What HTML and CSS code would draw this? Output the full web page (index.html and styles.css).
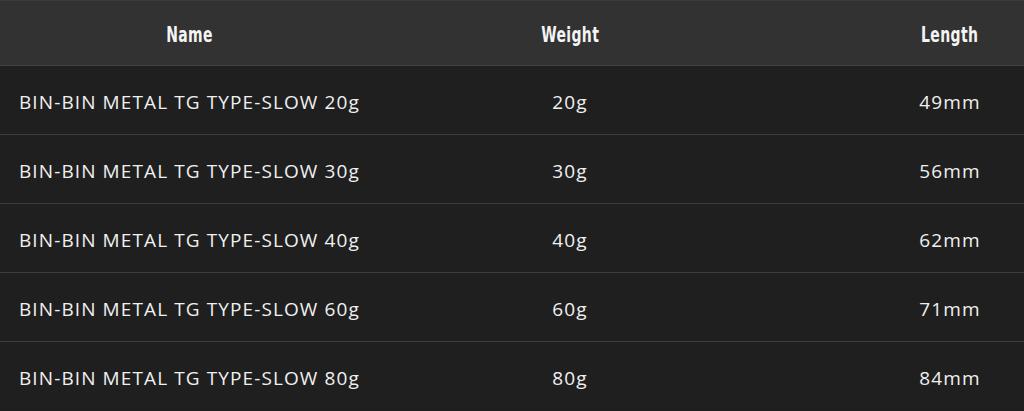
FILE: index.html
```html
<!DOCTYPE html>
<html>
<head>
<meta charset="utf-8">
<link rel="stylesheet" href="styles.css">
</head>
<body>
<div class="table">
  <div class="row head">
    <div class="cell c1"><span class="th">Name</span></div>
    <div class="cell c2"><span class="th">Weight</span></div>
    <div class="cell c3"><span class="th">Length</span></div>
  </div>
  <div class="row">
    <div class="cell c1">BIN-BIN METAL TG TYPE-SLOW 20g</div>
    <div class="cell c2">20g</div>
    <div class="cell c3">49mm</div>
  </div>
  <div class="row">
    <div class="cell c1">BIN-BIN METAL TG TYPE-SLOW 30g</div>
    <div class="cell c2">30g</div>
    <div class="cell c3">56mm</div>
  </div>
  <div class="row">
    <div class="cell c1">BIN-BIN METAL TG TYPE-SLOW 40g</div>
    <div class="cell c2">40g</div>
    <div class="cell c3">62mm</div>
  </div>
  <div class="row">
    <div class="cell c1">BIN-BIN METAL TG TYPE-SLOW 60g</div>
    <div class="cell c2">60g</div>
    <div class="cell c3">71mm</div>
  </div>
  <div class="row">
    <div class="cell c1">BIN-BIN METAL TG TYPE-SLOW 80g</div>
    <div class="cell c2">80g</div>
    <div class="cell c3">84mm</div>
  </div>
</div>
</body>
</html>
```
FILE: styles.css
```css
html, body {
  margin: 0;
  padding: 0;
  background: #1e1e1e;
}
.table {
  width: 1024px;
  font-family: "Open Sans", "Noto Sans", sans-serif;
  color: #f0f0f0;
}
.row {
  display: grid;
  grid-template-columns: 380px 380px 1fr;
  height: 68px;
  align-items: center;
  background: #1f1f1f;
  border-bottom: 1px solid #3c3c3c;
}
.row:last-child {
  border-bottom: none;
}
.row.head {
  height: 64px;
  background: #323232;
  border-top: 1px solid #3a3a3a;
  border-bottom: 1px solid #414141;
}
.cell {
  font-size: 19px;
  letter-spacing: 1.1px;
  padding-top: 3px;
}
.th {
  display: inline-block;
  font-family: "DejaVu Sans", sans-serif;
  font-stretch: condensed;
  font-weight: bold;
  font-size: 21px;
  letter-spacing: 0.5px;
  transform: scaleX(0.74);
  color: #f4f4f4;
}
.c1 {
  padding-left: 19px;
}
.head .c1 {
  padding-left: 0;
  text-align: center;
}
.c2 {
  text-align: center;
}
.c3 {
  text-align: center;
  padding-left: 116px;
}
```
